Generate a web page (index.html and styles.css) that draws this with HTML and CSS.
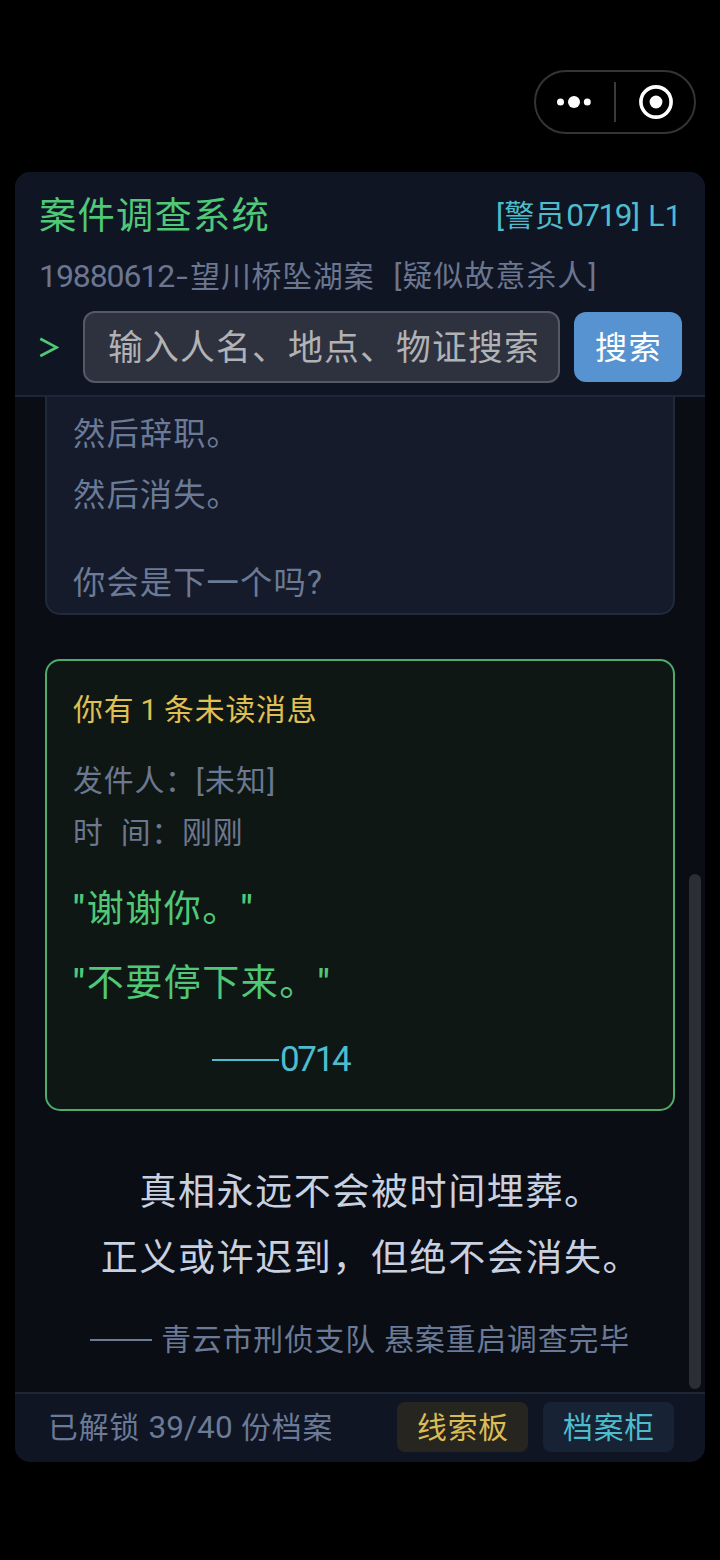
FILE: index.html
```html
<!DOCTYPE html>
<html lang="zh-CN">
<head>
<meta charset="utf-8">
<title>案件调查系统</title>
<link rel="stylesheet" href="styles.css">
</head>
<body>
<div class="screen">
  <nav class="capsule-row">
    <div class="capsule">
      <svg class="capsule-icon" width="36" height="36" viewBox="0 0 36 36" fill="#fff"><circle cx="4.5" cy="18" r="3.5"/><circle cx="18" cy="18" r="6"/><circle cx="31.3" cy="18" r="3.5"/></svg>
      <span class="capsule-divider"></span>
      <svg class="capsule-icon" width="36" height="36" viewBox="0 0 36 36"><circle cx="18" cy="18" r="15.1" fill="none" stroke="#fff" stroke-width="3.6"/><circle cx="18" cy="18" r="6.4" fill="#fff"/></svg>
    </div>
  </nav>
  <div class="panel">
    <header class="header">
      <div class="title-row">
        <h1 class="title">案件调查系统</h1>
        <span class="officer">[警员<span class="badge-number">0719</span>] L1</span>
      </div>
      <div class="case"><span class="case-name"><span class="case-number">19880612</span><span class="case-hyphen">-</span>望川桥坠湖案</span><span class="case-type">[疑似故意杀人]</span></div>
      <div class="search-row">
        <svg class="prompt" width="20" height="22" viewBox="0 0 20 22"><path d="M1.3 2.8 L17.6 11.4 L1.3 20" fill="none" stroke="#4fc878" stroke-width="2.7"/></svg>
        <div class="search-input">输入人名、地点、物证搜索</div>
        <div class="search-button">搜索</div>
      </div>
    </header>
    <main class="content">
      <section class="log">
        <p>然后辞职。</p>
        <p>然后消失。</p>
        <p class="log-question">你会是下一个吗?</p>
      </section>
      <section class="message">
        <p class="unread">你有 1 条未读消息</p>
        <p class="meta">发件人：<span class="sender">[未知]</span></p>
        <p class="meta"><span class="time-label">时</span>间：刚刚</p>
        <p class="quote quote-first"><span class="mark">"</span>谢谢你。<span class="mark">"</span></p>
        <p class="quote"><span class="mark">"</span>不要停下来。<span class="mark">"</span></p>
        <p class="signature"><span class="dash signature-dash"></span><span class="signature-number">0714</span></p>
      </section>
      <section class="closing">
        <p class="verse">真相永远不会被时间埋葬。</p>
        <p class="verse">正义或许迟到，但绝不会消失。</p>
        <p class="credit"><span class="dash credit-dash"></span><span>青云市刑侦支队 悬案重启调查完毕</span></p>
      </section>
      <div class="scrollbar"></div>
    </main>
    <footer class="footer">
      <span class="progress">已解锁 <span class="count">39/40</span> 份档案</span>
      <span class="tab tab-clues">线索板</span>
      <span class="tab tab-files">档案柜</span>
    </footer>
  </div>
</div>
</body>
</html>
```
FILE: styles.css
```css
* { box-sizing: border-box; }
body, h1, p { margin: 0; }
body {
  background: #000;
  font-family: Roboto, "Noto Sans CJK SC", sans-serif;
  color: #6b7a96;
  white-space: nowrap;
}
.screen {
  width: 720px;
  height: 1560px;
  padding: 70px 15px 98px;
  display: flex;
  flex-direction: column;
  overflow: hidden;
}
.capsule-row {
  display: flex;
  justify-content: flex-end;
  height: 102px;
  padding-right: 9px;
}
.capsule {
  width: 162px;
  height: 64px;
  border: 2px solid #343434;
  border-radius: 32px;
  display: flex;
  align-items: center;
  justify-content: space-between;
  padding: 0 20px;
}
.capsule-divider { width: 2px; height: 40px; background: #3a3a3a; }
.panel {
  flex: 1;
  display: flex;
  flex-direction: column;
  background: #0a0d14;
  border-radius: 15px;
  overflow: hidden;
}
.header {
  height: 225px;
  padding: 18px 23px 0 24px;
  background: #101524;
  border-bottom: 2px solid #1c2637;
}
.title-row {
  display: flex;
  justify-content: space-between;
  align-items: center;
  height: 52px;
}
.title {
  font-size: 37.3px;
  letter-spacing: 1.2px;
  line-height: 55px;
  font-weight: 400;
  color: #4fc878;
}
.officer { font-size: 30px; letter-spacing: 0.4px; line-height: 54px; color: #4dbdce; }
.badge-number { font-size: 31.5px; letter-spacing: -1.5px; padding: 0 1px; }
.case {
  display: flex;
  gap: 19px;
  margin-top: 13px;
  font-size: 29.8px;
  letter-spacing: 0.9px;
  line-height: 42px;
  height: 42px;
  color: #6b7690;
}
.case-number { font-size: 32px; letter-spacing: -1.1px; }
.case-hyphen { display: inline-block; transform: scaleX(1.4); margin: 0 3px 0 4px; }
.case-type { letter-spacing: 1.2px; }
.search-row { display: flex; align-items: center; margin-top: 14px; }
.prompt { width: 20px; margin-right: 24px; }
.search-input {
  width: 477px;
  height: 72px;
  padding-left: 23px;
  border: 2px solid #555867;
  border-radius: 12px;
  background: #2e313e;
  font-size: 34.8px;
  letter-spacing: 1.2px;
  line-height: 71px;
  color: #b1b2b5;
  overflow: hidden;
}
.search-button {
  width: 108px;
  height: 70px;
  margin-left: 14px;
  padding-left: 1px;
  border-radius: 12px;
  background: #5793d0;
  color: #fff;
  font-size: 32.2px;
  letter-spacing: 1.2px;
  line-height: 72px;
  text-align: center;
}
.content {
  position: relative;
  height: 995px;
  padding: 0 30px;
  overflow: hidden;
}
.log {
  height: 218px;
  padding: 7px 26px 0;
  border: 2px solid #202a3c;
  border-top: 0;
  border-radius: 0 0 15px 15px;
  background: #151b2a;
  font-size: 32.3px;
  letter-spacing: 1.1px;
  line-height: 61px;
}
.log-question { margin-top: 27px; }
.message {
  height: 452px;
  margin-top: 44px;
  padding: 23px 26px 0;
  border: 2px solid #4dac6c;
  border-radius: 15px;
  background: #0f1714;
}
.unread { font-size: 29.8px; letter-spacing: 0.9px; word-spacing: -2.3px; line-height: 52px; color: #e0c052; margin-bottom: 19px; }
.meta { font-size: 29.8px; letter-spacing: 0.9px; line-height: 52px; color: #6c7890; }
.sender { letter-spacing: 1.3px; }
.time-label { margin-right: 17px; }
.quote { font-size: 37px; letter-spacing: 1.5px; line-height: 74px; color: #4fc878; }
.quote-first { margin-top: 14px; }
.mark { font-weight: 500; letter-spacing: 1.9px; }
.signature {
  display: flex;
  align-items: center;
  padding-left: 139px;
  margin-top: 6px;
  line-height: 66px;
  color: #4dbdce;
}
.signature-number { padding-left: 1px; font-size: 35px; letter-spacing: -2.3px; }
.dash { height: 2px; background: currentColor; }
.signature-dash { width: 67px; }
.closing { padding-top: 49px; text-align: center; }
.verse { padding-left: 22px; font-size: 37px; letter-spacing: 1.6px; line-height: 66px; color: #c9d1e0; }
.credit {
  display: flex;
  justify-content: center;
  align-items: center;
  gap: 9px;
  margin-top: 22px;
  font-size: 29.8px;
  letter-spacing: 0.9px;
  line-height: 52px;
}
.credit-dash { width: 62px; }
.scrollbar {
  position: absolute;
  top: 477px;
  right: 4px;
  width: 12px;
  height: 515px;
  border-radius: 6px;
  background: #2b2e35;
}
.footer {
  height: 70px;
  padding: 0 31px 2px 33px;
  display: flex;
  align-items: center;
  border-top: 2px solid #1c2637;
  background: #101524;
  font-size: 29.8px;
  letter-spacing: 0.9px;
}
.progress { margin-right: auto; line-height: 52px; padding-top: 2px; }
.count { font-size: 31.5px; letter-spacing: 0.1px; }
.tab {
  width: 131px;
  height: 50px;
  margin-left: 15px;
  padding-left: 1px;
  border-radius: 8px;
  line-height: 51px;
  text-align: center;
}
.tab-clues { background: #26251f; color: #d9bd54; }
.tab-files { background: #172335; color: #4dbdce; }
```
